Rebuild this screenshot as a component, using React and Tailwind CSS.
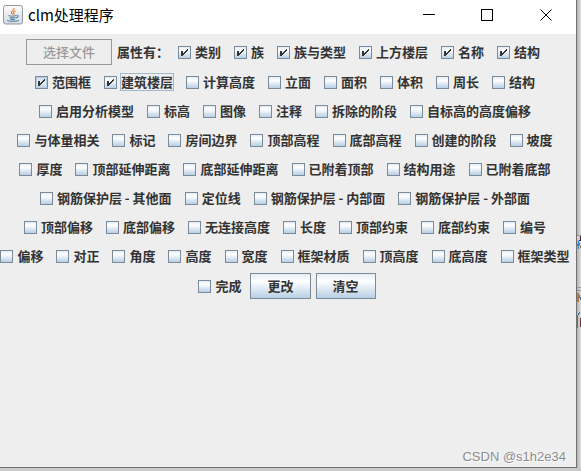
import React, { useState } from 'react';

const rows = [
  ['范围框', '建筑楼层', '计算高度', '立面', '面积', '体积', '周长', '结构'],
  ['启用分析模型', '标高', '图像', '注释', '拆除的阶段', '自标高的高度偏移'],
  ['与体量相关', '标记', '房间边界', '顶部高程', '底部高程', '创建的阶段', '坡度'],
  ['厚度', '顶部延伸距离', '底部延伸距离', '已附着顶部', '结构用途', '已附着底部'],
  ['钢筋保护层 - 其他面', '定位线', '钢筋保护层 - 内部面', '钢筋保护层 - 外部面'],
  ['顶部偏移', '底部偏移', '无连接高度', '长度', '顶部约束', '底部约束', '编号'],
  ['偏移', '对正', '角度', '高度', '宽度', '框架材质', '顶高度', '底高度', '框架类型']
];

const firstRow = ['类别', '族', '族与类型', '上方楼层', '名称', '结构'];

const JavaIcon = () => (
  <svg className="shrink-0" width="20" height="20" viewBox="0 0 20 20" aria-hidden="true">
    <defs>
      <linearGradient id="tile" x1="0" y1="0" x2="0" y2="1">
        <stop offset="0" stopColor="#fdfdfd" />
        <stop offset="1" stopColor="#d3d8dd" />
      </linearGradient>
    </defs>
    <rect x="0.5" y="0.5" width="19" height="18.5" rx="2" fill="url(#tile)" stroke="#8d99a5" />
    <path d="M11 3c.8 2-3 2.600-2.500 4.600.2.900 1 1.300 1.100 2.200M12.600 5.700c-2 .8-2.500 1.600-1.700 2.500.4.600.1 1.100-.4 1.500" fill="none" stroke="#e8813a" strokeWidth="1.200" />
    <path d="M5.500 10.600c2 .7 5.800.7 7.500 0M6.500 12.600c1.800.6 4.300.6 6 0M13.300 10.300c2.700-.6 2.200 2-.4 2.600M7.200 14.300c1.400.4 3.500.4 4.800 0M4.500 15c-.5 1.700 10 1.700 11.300.2" fill="none" stroke="#5b87a8" strokeWidth="1.100" />
  </svg>
);

const CheckItem = ({ label, defaultChecked = false, focused = false, hovered = false }) => (
  <label className="flex h-6 shrink-0 items-center gap-1 px-1 whitespace-nowrap">
    <span className="relative flex size-[13px] shrink-0">
      <input
        type="checkbox"
        defaultChecked={defaultChecked}
        className={`peer size-[13px] appearance-none border border-[#7a8a99] bg-linear-to-b ${hovered ? 'from-[#c8d8e8] via-[#e8f0f8] to-[#b8cfe5] shadow-[inset_0_0_0_1px_#b8cfe5]' : 'from-[#e4edf5] via-white via-30% to-[#b8cfe5]'}`}
      />
      <svg className="pointer-events-none absolute inset-0 hidden peer-checked:block" width="13" height="13" viewBox="0 0 13 13" shapeRendering="crispEdges">
        <path d="M3 5h2v5H3zM5 7h1v2H5zM6 6h1v2H6zM7 5h1v2H7zM8 4h1v2H8zM9 3h1v2H9z" fill="#333" />
      </svg>
    </span>
    <span className={focused ? 'outline-1 outline-[#a3b8cc]' : ''}>{label}</span>
  </label>
);

const SwingButton = ({ children, onClick }) => (
  <button
    type="button"
    onClick={onClick}
    className="h-[26px] shrink-0 border border-[#7a8a99] bg-linear-to-b from-[#e4edf5] via-white via-30% to-[#b8cfe5] px-4"
  >
    {children}
  </button>
);

// sliver of the editor window that shows behind the dialog
const Backdrop = () => (
  <aside className="w-1 shrink-0 bg-linear-to-r from-[#b2b2b2] to-[#dedede] pt-[235px]" aria-hidden="true">
    <svg width="4" height="94" viewBox="0 0 4 94" shapeRendering="crispEdges">
      <path d="M0 0h4v1H0zM0 52h4v1H0zM0 55h4v1H0z" fill="#999" />
      <path d="M0 1h3v4H0z" fill="#d9cfae" />
      <path d="M3 1h1v4H3zM2 5h2v1H2z" fill="#3b2558" />
      <path d="M1 6h1v8H1zM0 9h1v2H0zM2 8h1v2H2zM3 62h1v3H3zM2 60h1v3H2zM0 80h1v13H0zM1 78h1v2H1z" fill="#2f7fc0" />
      <path d="M0 58h2v9H0z" fill="#b8793a" />
      <path d="M3 10h1v3H3zM2 77h1v2H2z" fill="#b8793a" />
      <path d="M3 83h1v9H3z" fill="#6b2a35" />
    </svg>
  </aside>
);

const App = () => {
  const [formKey, setFormKey] = useState(0);

  return (
    <div className="flex min-h-screen overflow-hidden bg-[#cbcbcb] pb-[3px] font-['Noto_Sans_CJK_SC',sans-serif]">
      <main className="flex min-w-0 flex-1 flex-col border-r border-b border-[#707070] bg-[#eeeeee]">
        <header className="flex h-[34px] shrink-0 items-center bg-white pb-1 pl-[3px]">
          <JavaIcon />
          <h1 className="ml-[5px] flex-1 text-[15px] leading-5 text-black">clm处理程序</h1>
          <div className="flex text-black">
            <button type="button" aria-label="最小化" className="flex h-[30px] w-[58px] items-center justify-center">
              <svg width="12" height="12" viewBox="0 0 12 12" stroke="currentColor"><path d="M0 5.500h12" /></svg>
            </button>
            <button type="button" aria-label="最大化" className="flex h-[30px] w-[58px] items-center justify-center">
              <svg width="12" height="12" viewBox="0 0 12 12" fill="none" stroke="currentColor"><rect x="0.5" y="0.5" width="11" height="11" /></svg>
            </button>
            <button type="button" aria-label="关闭" className="flex h-[30px] w-[60px] items-center justify-center">
              <svg width="12" height="12" viewBox="0 0 12 12" stroke="currentColor"><path d="M0.500 0.500l11 11M11.500 0.500l-11 11" /></svg>
            </button>
          </div>
        </header>

        <form key={formKey} className="flex flex-1 flex-col gap-[5px] pt-[5px] pr-[6px] text-[13px] leading-4 font-bold text-[#333333]">
          <div className="flex items-center justify-center gap-[5px]">
            <button type="button" disabled className="h-[26px] shrink-0 border border-[#999999] px-4 font-medium text-[#999999]">选择文件</button>
            <span className="shrink-0 whitespace-nowrap">属性有：</span>
            {firstRow.map((label) => (
              <CheckItem key={label} label={label} defaultChecked />
            ))}
          </div>
          {rows.map((items, i) => (
            <div key={i} className="flex items-center justify-center gap-[5px]">
              {items.map((label) => (
                <CheckItem
                  key={label}
                  label={label}
                  defaultChecked={label === '范围框' || label === '建筑楼层'}
                  hovered={label === '范围框'}
                  focused={label === '建筑楼层'}
                />
              ))}
            </div>
          ))}
          <div className="flex items-center justify-center gap-[5px]">
            <CheckItem label="完成" />
            <SwingButton>更改</SwingButton>
            <SwingButton onClick={() => setFormKey(formKey + 1)}>清空</SwingButton>
          </div>
        </form>

        <footer className="pr-2.5 text-right font-['Liberation_Sans',sans-serif] text-[13px] leading-5 text-[#8c8c8c] text-shadow-[1px_1px_0_#ffffff]">CSDN @s1h2e34</footer>
      </main>
      <Backdrop />
    </div>
  );
};

export default App;
